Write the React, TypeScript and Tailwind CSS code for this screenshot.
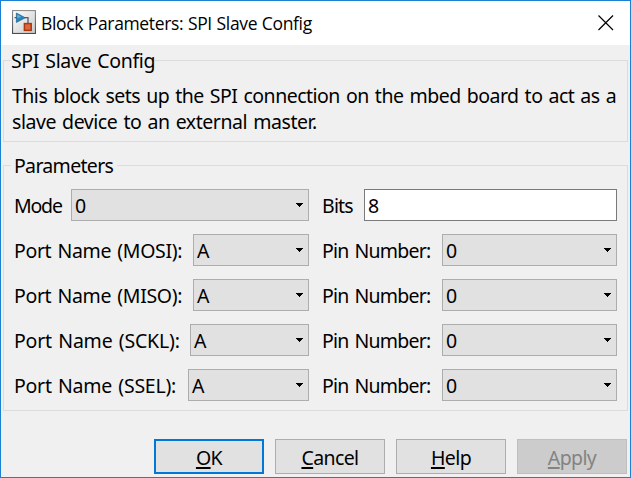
import type { ReactNode } from "react";

function Caret() {
  return (
    <svg width="7" height="4" viewBox="0 0 7 4" shapeRendering="crispEdges" className="mb-[1px] shrink-0">
      <path d="M0 0H7V1H6V2H5V3H4V4H3V3H2V2H1V1H0Z" fill="#000" />
    </svg>
  );
}

function Combo({ value, className }: { value: string; className: string }) {
  return (
    <div className={`flex h-8 items-center justify-between border border-[#adadad] bg-[#e1e1e1] pl-[3px] pr-[5px] ${className}`}>
      <span className="pt-[2px]">{value}</span>
      <Caret />
    </div>
  );
}

const ports = [
  { name: "MOSI", label: "w-[179px]", spacing: "tracking-[-0.35px]" },
  { name: "MISO", label: "w-[179px]", spacing: "tracking-[-0.35px]" },
  { name: "SCKL", label: "w-[176px]", spacing: "tracking-[-0.2px]" },
  { name: "SSEL", label: "w-[174px]", spacing: "tracking-[-0.25px]" },
];

function Button({ className = "border border-[#adadad] bg-[#e1e1e1]", children }: { className?: string; children: ReactNode }) {
  return (
    <button className={`flex h-[35px] w-[110px] items-center justify-center pt-[3px] leading-[26px] tracking-[-0.6px] ${className}`}>
      <span>{children}</span>
    </button>
  );
}

function Key({ children }: { children: ReactNode }) {
  return <span className="underline decoration-2 underline-offset-[2px] [text-decoration-skip-ink:none]">{children}</span>;
}

export default function App() {
  return (
    <div className="flex h-[478px] w-[631px] flex-col overflow-hidden border border-[#1a80d4] bg-[#f0f0f0] font-['Noto_Sans',sans-serif] text-[19.5px] leading-[26px] text-black [word-spacing:1.5px]">
      <header className="flex h-11 shrink-0 items-center bg-white pl-[11px] pr-[16px]">
        <svg width="24" height="24" viewBox="0 0 24 24" className="mb-[2px] shrink-0">
          <defs>
            <linearGradient id="face" x1="0" y1="0" x2="1" y2="1">
              <stop offset="0" stopColor="#fff" />
              <stop offset="1" stopColor="#c9c9c9" />
            </linearGradient>
            <linearGradient id="edge" x1="0" y1="0" x2="0" y2="1">
              <stop offset="0" stopColor="#8e8e8e" />
              <stop offset="1" stopColor="#4c4c4c" />
            </linearGradient>
          </defs>
          <rect x="0.5" y="0.5" width="23" height="23" fill="url(#face)" stroke="url(#edge)" strokeWidth="1.2" />
          <path d="M2.5 7.7H5M12 7.7H16V13" fill="none" stroke="#5a5a5a" strokeWidth="1.3" />
          <path d="M4.4 3L13.2 7.8L4.4 12.4Z" fill="#2f83b5" stroke="#1f6b9c" strokeWidth="0.8" />
          <path d="M5.2 4.6L9.5 7L5.2 8Z" fill="#68b4dc" />
          <rect x="12.4" y="13.6" width="6.8" height="6.8" fill="#e0663a" stroke="#a93712" strokeWidth="1.5" />
        </svg>
        <h1 className="ml-[5px] grow whitespace-nowrap font-['Open_Sans',sans-serif] text-[17.5px] tracking-[-0.35px] [word-spacing:0.5px]">
          Block Parameters: SPI Slave Config
        </h1>
        <svg width="16" height="16" viewBox="0 0 16 16" className="shrink-0">
          <path d="M0.5 0.5L15 15M15 0.5L0.5 15" stroke="#000" strokeWidth="1.2" />
        </svg>
      </header>

      <fieldset className="mx-[2px] mt-[3px] h-[94px] shrink-0 border border-[#dcdcdc] pl-2">
        <legend className="-ml-px h-[25px] whitespace-nowrap leading-[25px] tracking-[-0.35px]">SPI Slave Config</legend>
        <p className="whitespace-nowrap pt-[10px]">
          <span className="block tracking-[-0.51px]">This block sets up the SPI connection on the mbed board to act as a</span>
          <span className="block tracking-[-0.45px]">slave device to an external master.</span>
        </p>
      </fieldset>

      <fieldset className="mx-[2px] mt-[11px] h-[258px] shrink-0 border border-[#dcdcdc] pl-[10px] pr-[9px]">
        <legend className="-ml-[3px] h-[25px] w-[106px] whitespace-nowrap pl-[3px] leading-[25px] tracking-[-0.68px]">Parameters</legend>
        <div className="flex flex-col gap-[13px] pt-[11px]">
          <div className="flex">
            <div className="flex w-[295px] items-center">
              <span className="w-[57px] pt-[2px] tracking-[-1.2px]">Mode</span>
              <Combo value="0" className="w-[238px]" />
            </div>
            <div className="ml-[13px] flex items-center">
              <span className="w-[42px] pt-[2px] tracking-[-0.8px]">Bits</span>
              <div className="flex h-8 w-[253px] items-center border border-[#7a7a7a] bg-white pl-[3px] pt-[2px]">8</div>
            </div>
          </div>
          {ports.map((port) => (
            <div key={port.name} className="flex">
              <div className="flex w-[295px] items-center">
                <span className={`shrink-0 whitespace-nowrap pt-px ${port.label} ${port.spacing}`}>Port Name ({port.name}):</span>
                <Combo value="A" className="grow" />
              </div>
              <div className="ml-[13px] flex items-center">
                <span className="w-[120px] whitespace-nowrap pt-px tracking-[-0.76px]">Pin Number:</span>
                <Combo value="0" className="w-[175px]" />
              </div>
            </div>
          ))}
        </div>
      </fieldset>

      <footer className="mr-[3px] mt-7 flex justify-end gap-[11px]">
        <Button className="border-2 border-[#0078d7] bg-[#e1e1e1]"><Key>O</Key>K</Button>
        <Button><Key>C</Key>ancel</Button>
        <Button><Key>H</Key>elp</Button>
        <Button className="border border-[#bfbfbf] bg-[#cccccc] text-[#838383]"><Key>A</Key>pply</Button>
      </footer>
    </div>
  );
}
